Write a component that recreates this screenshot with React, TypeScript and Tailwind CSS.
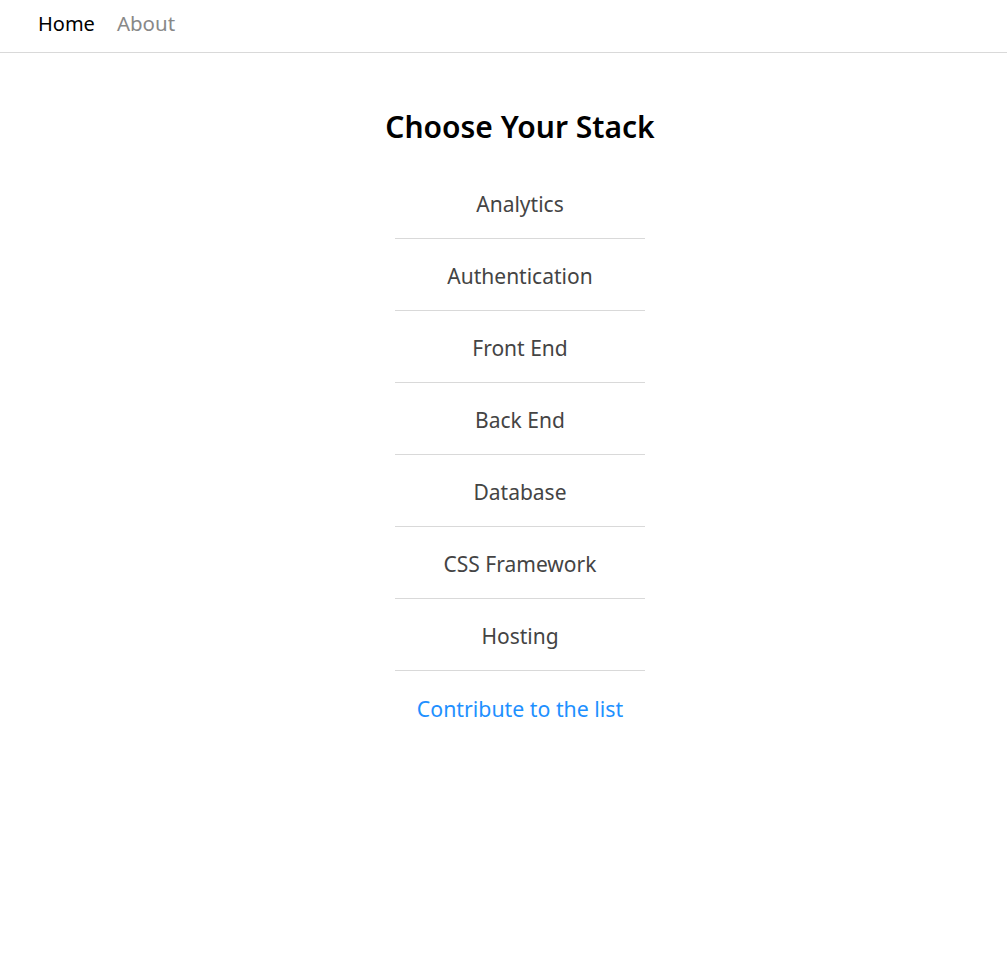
const stacks = [
  'Analytics',
  'Authentication',
  'Front End',
  'Back End',
  'Database',
  'CSS Framework',
  'Hosting',
];

export default function App() {
  return (
    <div className="min-h-screen bg-white" style={{ fontFamily: '"Noto Sans", "Open Sans", sans-serif' }}>
      {/* Nav */}
      <nav className="flex items-center h-[53px] pb-[5px] border-b border-[#d9d9d9] px-[38px] gap-[22px] text-[20px]">
        <a href="#" className="text-black">Home</a>
        <a href="#" className="text-[#888888] text-[20.5px]">About</a>
      </nav>

      {/* Main */}
      <main className="flex flex-col items-center pl-[33px] pt-[54px]">
        <h1 className="text-[30px] font-semibold text-black leading-[40px]">Choose Your Stack</h1>
        <ul className="w-[250px] mt-[20px]">
          {stacks.map((s) => (
            <li key={s} className="h-[72px] pt-[4px] flex items-center justify-center border-b border-[#d9d9d9] text-[21px] text-[#444444]">
              {s}
            </li>
          ))}
        </ul>
        <a href="#" className="h-[74px] pt-[2px] flex items-center text-[21.3px] text-[#1e90ff]">Contribute to the list</a>
      </main>
    </div>
  );
}
